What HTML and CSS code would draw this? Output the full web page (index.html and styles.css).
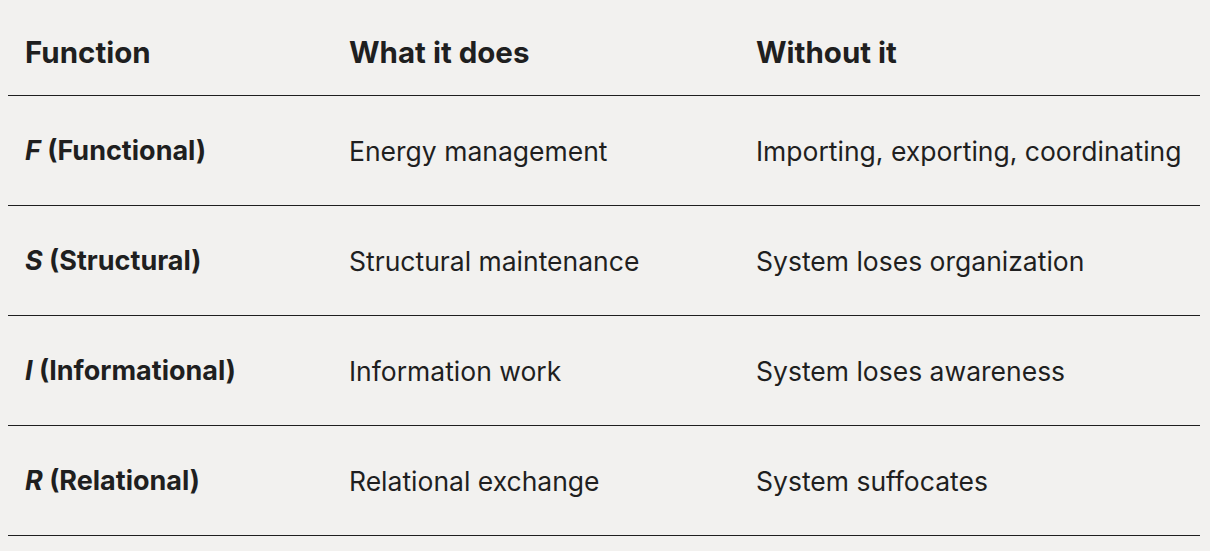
FILE: index.html
```html
<!DOCTYPE html>
<html>
<head>
<meta charset="utf-8">
<link rel="stylesheet" href="styles.css">
</head>
<body>
<div class="table">
  <div class="row head">
    <div class="cell c1">Function</div>
    <div class="cell c2">What it does</div>
    <div class="cell c3">Without it</div>
  </div>
  <div class="row">
    <div class="cell c1 b"><em>F</em> (Functional)</div>
    <div class="cell c2">Energy management</div>
    <div class="cell c3">Importing, exporting, coordinating</div>
  </div>
  <div class="row">
    <div class="cell c1 b"><em>S</em> (Structural)</div>
    <div class="cell c2">Structural maintenance</div>
    <div class="cell c3">System loses organization</div>
  </div>
  <div class="row">
    <div class="cell c1 b"><em>I</em> (Informational)</div>
    <div class="cell c2">Information work</div>
    <div class="cell c3">System loses awareness</div>
  </div>
  <div class="row">
    <div class="cell c1 b"><em>R</em> (Relational)</div>
    <div class="cell c2">Relational exchange</div>
    <div class="cell c3">System suffocates</div>
  </div>
</div>
</body>
</html>
```
FILE: styles.css
```css
html, body {
  margin: 0;
  background: #f2f1ef;
}
body {
  padding: 0 10px 0 8px;
  font-family: "Inter", "DejaVu Sans", sans-serif;
  color: #1f1f1f;
}
.table {
  display: flex;
  flex-direction: column;
}
.row {
  display: grid;
  grid-template-columns: 341px 407px 1fr;
  height: 110px;
  align-items: center;
  border-bottom: 1px solid #1f1f1f;
  font-size: 26.5px;
  box-sizing: border-box;
}
.row.head {
  height: 96px;
  padding-top: 8px;
  font-weight: 700;
  font-size: 29.5px;
}
.c1 {
  padding-left: 17px;
}
.b {
  font-weight: 700;
  font-size: 27px;
}
em {
  font-style: italic;
}
```
